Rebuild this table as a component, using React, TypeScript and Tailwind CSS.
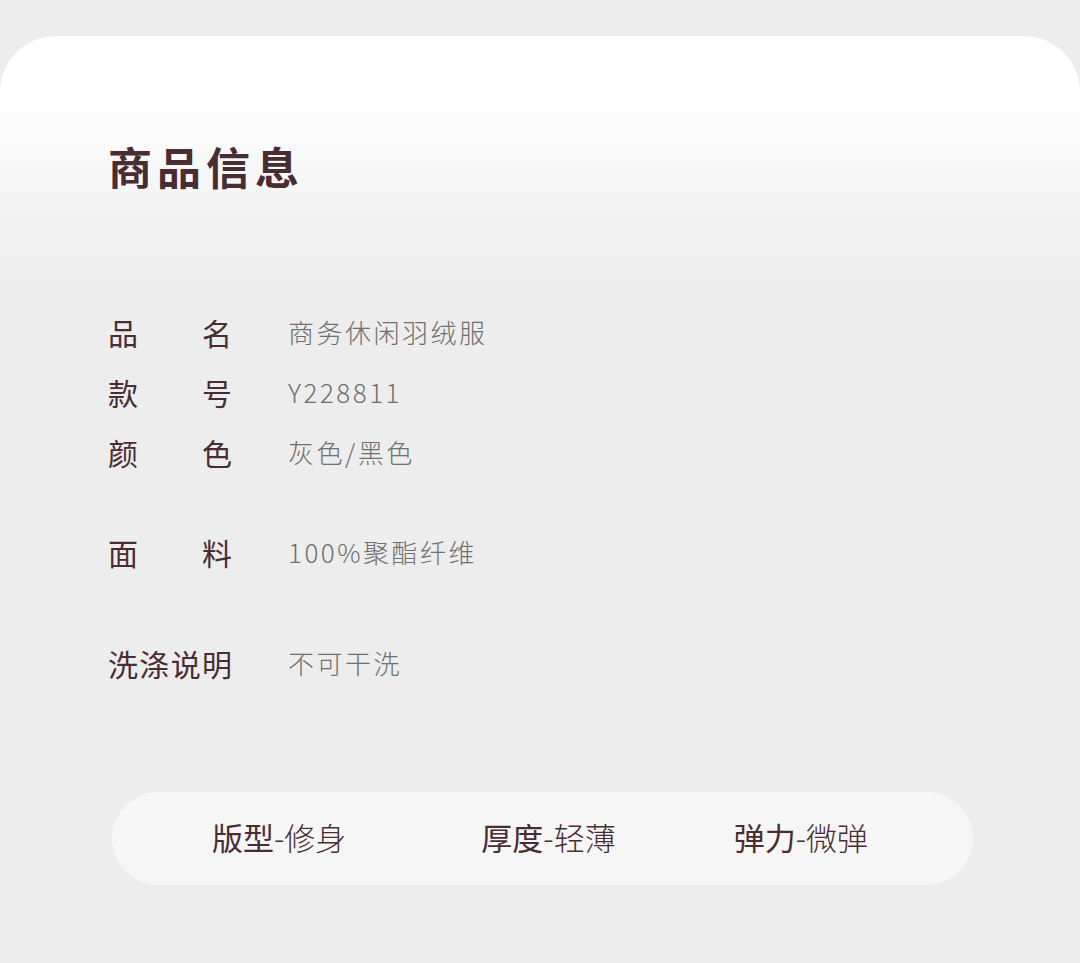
const ROWS = [
  { label: '品名', value: '商务休闲羽绒服', gap: '' },
  { label: '款号', value: 'Y228811', gap: '' },
  { label: '颜色', value: '灰色/黑色', gap: '' },
  { label: '面料', value: '100%聚酯纤维', gap: 'mt-[40px]' },
  { label: '洗涤说明', value: '不可干洗', gap: 'mt-[51px]' },
]

const TAGS = [
  { k: '版型', v: '修身', ml: 'ml-[100px]' },
  { k: '厚度', v: '轻薄', ml: 'ml-[135px]' },
  { k: '弹力', v: '微弹', ml: 'ml-[118px]' },
]

export default function App() {
  return (
    <div
      className="min-h-[963px] bg-[#ededed] pt-[36px]"
      style={{ fontFamily: '"Noto Sans CJK SC", "Noto Sans", sans-serif' }}
    >
      <section className="h-[927px] rounded-t-[56px] bg-[linear-gradient(to_bottom,#ffffff_0px,#ffffff_50px,#ededed_250px)] pl-[108px] pt-[108px]">
        <h2 className="text-[44px] leading-[44px] font-bold tracking-[5px] text-[#4a2c33]">商品信息</h2>

        <div className="mt-[114px] flex flex-col">
          {ROWS.map((r) => (
            <div key={r.label} className={`flex h-[60px] items-center ${r.gap}`}>
              <span className="w-[124px] text-justify text-[30px] leading-[30px] text-[#4a2c33] [text-align-last:justify]">
                {r.label}
              </span>
              <span className="ml-[56px] text-[26px] leading-[30px] font-light tracking-[2.5px] text-[#707070]">
                {r.value}
              </span>
            </div>
          ))}
        </div>

        <div className="mt-[99px] ml-[4px] flex h-[93px] w-[861px] items-center rounded-full bg-[#f6f6f6] pb-[4px]">
          {TAGS.map((t) => (
            <span key={t.k} className={`text-[31px] leading-[31px] text-[#4a2c33] ${t.ml}`}>
              {t.k}
              <span className="font-light">-{t.v}</span>
            </span>
          ))}
        </div>
      </section>
    </div>
  )
}
